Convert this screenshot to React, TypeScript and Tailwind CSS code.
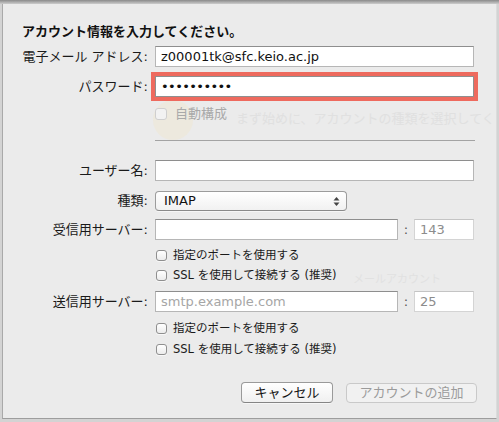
import React from "react";

const FONT = "font-['DejaVu_Sans','Noto_Sans_CJK_JP',sans-serif]";

function Checkbox({ label, disabled }: { label: string; disabled?: boolean }) {
  return (
    <div className="flex items-center h-[14px]">
      <span
        className={
          disabled
            ? "w-[12px] h-[12px] rounded-[3px] border border-[#cfcfcf] bg-[#f2f2f2]"
            : "w-[11px] h-[11px] rounded-[3px] border border-[#8f8f8f] bg-gradient-to-b from-white to-[#ececec] shadow-[0_1px_0_#f8f8f8]"
        }
      />
      <span
        className={
          disabled
            ? "ml-[8px] text-[13px] leading-[14px] text-[#a9a9a9]"
            : "ml-[6px] text-[11.5px] leading-[14px] text-[#1a1a1a]"
        }
      >
        {label}
      </span>
    </div>
  );
}

function Row({ label, children, h = "h-[21px]" }: { label: string; children: React.ReactNode; h?: string }) {
  return (
    <div className={`flex items-center ${h}`}>
      <div className="w-[145px] text-right text-[13px] leading-[16px] text-[#1a1a1a] whitespace-nowrap">{label}</div>
      <div className="ml-[7px] flex items-center h-full">{children}</div>
    </div>
  );
}

function TextInput({ w, value, placeholder, muted }: { w: string; value?: string; placeholder?: string; muted?: boolean }) {
  return (
    <div
      className={`${w} h-[21px] bg-white border ${
        muted ? "border-[#d4d4d4] border-t-[#c4c4c4]" : "border-[#b6b6b6] border-t-[#8e8e8e]"
      } flex items-center pl-[5px] text-[13px] leading-[16px] whitespace-nowrap overflow-hidden`}
    >
      {value ? (
        <span className={muted ? "text-[#8c8c8c]" : "text-[#111]"}>{value}</span>
      ) : placeholder ? (
        <span className="text-[#a6a6a6]">{placeholder}</span>
      ) : null}
    </div>
  );
}

export default function App() {
  return (
    <div className={`w-[499px] h-[422px] bg-[#d3d3d3] overflow-hidden flex flex-col ${FONT}`}>
      <div className="h-[4px] shrink-0 bg-gradient-to-b from-[#8a8a8a] to-[#cdcdcd]" />
      <div className="relative ml-[2px] w-[495px] h-[415px] shrink-0 bg-[#ebebeb] border-l border-b border-r border-l-[#a9a9a9] border-b-[#9d9d9d] border-r-[#dcdcdc] flex flex-col">
        {/* ghosted background content seen through the sheet */}
        <div className="absolute left-[150px] top-[96px] w-[40px] h-[40px] rounded-full bg-[#eee7d6] opacity-60" />
        <div className="absolute left-[233px] top-[105px] text-[13px] text-[#e0e0e0] whitespace-nowrap">
          まず始めに、アカウントの種類を選択してく
        </div>
        <div className="absolute left-[350px] top-[268px] text-[11px] text-[#e1e1e1] whitespace-nowrap">
          メールアカウント
        </div>

        <div className="relative flex flex-col">
          <div className="mt-[20px] pl-[19px] h-[16px] text-[13px] leading-[16px] font-bold text-[#111] whitespace-nowrap">
            アカウント情報を入力してください。
          </div>

          <div className="mt-[6px]">
            <Row label="電子メール アドレス:">
              <TextInput w="w-[319px]" value="z00001tk@sfc.keio.ac.jp" />
            </Row>
          </div>

          <div className="mt-[9px]">
            <Row label="パスワード:">
              <div className="w-[319px] h-[21px] bg-white border border-[#8f8f8f] shadow-[0_0_0_4px_#ee6a5e] flex items-center pl-[5px] text-[13px] leading-[16px] tracking-[-0.6px] text-[#111]">
                ••••••••••
              </div>
            </Row>
          </div>

          <div className="mt-[10px] pl-[152px]">
            <Checkbox label="自動構成" disabled />
          </div>

          <div className="mt-[19px] ml-[152px] w-[320px] h-px bg-[#a3a3a3]" />

          <div className="mt-[19px]">
            <Row label="ユーザー名:">
              <TextInput w="w-[319px]" />
            </Row>
          </div>

          <div className="mt-[10px]">
            <Row label="種類:" h="h-[20px]">
              <div className="w-[192px] h-[20px] rounded-[4px] border border-[#9c9c9c] border-b-[#8a8a8a] bg-gradient-to-b from-white to-[#f1f1f1] flex items-center justify-between pl-[8px] pr-[6px] shadow-[0_1px_0_#f6f6f6]">
                <span className="text-[13px] leading-[16px] text-[#111]">IMAP</span>
                <svg width="7" height="11" viewBox="0 0 7 11">
                  <path d="M3.5 1 L6.5 4.5 L0.5 4.5 Z" fill="#444" />
                  <path d="M3.5 10 L6.5 6.5 L0.5 6.5 Z" fill="#444" />
                </svg>
              </div>
            </Row>
          </div>

          <div className="mt-[8px]">
            <Row label="受信用サーバー:">
              <TextInput w="w-[243px]" />
              <span className="w-[16px] text-center text-[13px] text-[#555]">:</span>
              <TextInput w="w-[60px]" value="143" muted />
            </Row>
          </div>

          <div className="mt-[8px] pl-[153px]">
            <Checkbox label="指定のポートを使用する" />
          </div>
          <div className="mt-[6px] pl-[153px]">
            <Checkbox label="SSL を使用して接続する (推奨)" />
          </div>

          <div className="mt-[9px]">
            <Row label="送信用サーバー:">
              <TextInput w="w-[243px]" placeholder="smtp.example.com" />
              <span className="w-[16px] text-center text-[13px] text-[#555]">:</span>
              <TextInput w="w-[60px]" value="25" muted />
            </Row>
          </div>

          <div className="mt-[9px] pl-[153px]">
            <Checkbox label="指定のポートを使用する" />
          </div>
          <div className="mt-[7px] pl-[153px]">
            <Checkbox label="SSL を使用して接続する (推奨)" />
          </div>

          <div className="mt-[26px] pl-[238px] flex items-center">
            <div className="w-[92px] h-[21px] rounded-[4px] border border-[#9a9a9a] border-b-[#858585] bg-gradient-to-b from-white to-[#f0f0f0] flex items-center justify-center text-[13px] leading-[16px] text-[#111] shadow-[0_1px_0_#f6f6f6]">
              キャンセル
            </div>
            <div className="ml-[13px] w-[131px] h-[20px] rounded-[4px] border border-[#c9c9c9] bg-[#f1f1f1] flex items-center justify-center text-[13px] leading-[16px] text-[#9b9b9b]">
              アカウントの追加
            </div>
          </div>
        </div>
      </div>
    </div>
  );
}
